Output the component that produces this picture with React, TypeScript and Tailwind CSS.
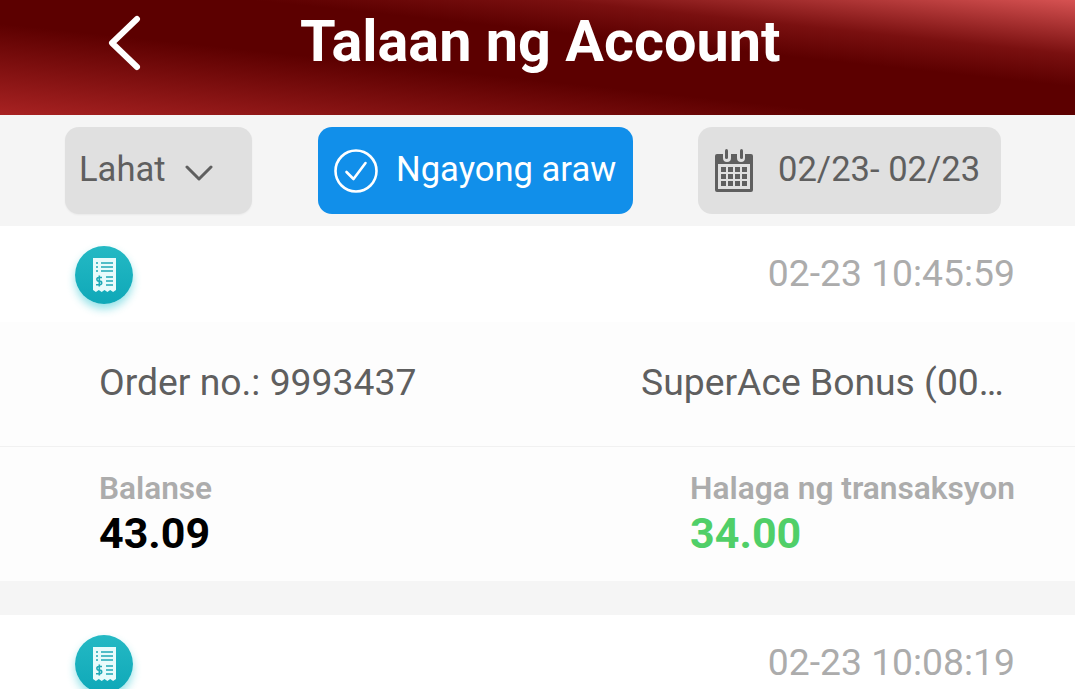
const font = { fontFamily: "Roboto, sans-serif" };

function ReceiptIcon() {
  return (
    <div className="flex h-[58px] w-[58px] items-center justify-center rounded-full bg-[linear-gradient(180deg,#24b9c4_0%,#0fa8b8_100%)] shadow-[0_5px_8px_rgba(20,190,205,0.45)]">
      <svg width="25" height="36" viewBox="0 0 25 36">
        <path d="M1 1h23v32l-2.9 2-2.9-2-2.8 2-2.9-2-2.8 2-2.9-2-2.9 2L1 33z" fill="#e8fbfb" />
        <g stroke="#1fa9b6" strokeWidth="1.6" fill="none">
          <path d="M4 6h2M4 10h2M4 14h2M9 6h12M9 10h12M9 14h12M14 20h7M14 24h7M14 28h7" />
          <path d="M10 20.5H6.7a1.8 1.8 0 0 0 0 3.6h1.2a1.8 1.8 0 0 1 0 3.6H4M7.3 18.5v11" />
        </g>
      </svg>
    </div>
  );
}

function CalendarIcon() {
  return (
    <svg width="40" height="44" viewBox="0 0 40 44">
      <path d="M3 5h6v4a4 4 0 0 0 8 0V5h6v4a4 4 0 0 0 8 0V5h6a2 2 0 0 1 2 2v34a2 2 0 0 1-2 2H3a2 2 0 0 1-2-2V7a2 2 0 0 1 2-2z" fill="#5f5f5f" />
      <rect x="11" y="0" width="3" height="10" rx="1.5" fill="#5f5f5f" />
      <rect x="26" y="0" width="3" height="10" rx="1.5" fill="#5f5f5f" />
      <rect x="4" y="15" width="32" height="25" fill="#e0e0e0" />
      <g fill="#5f5f5f">
        {[18, 25, 32].map((y) =>
          [7, 14, 21, 28].map((x) => <rect key={`${x}-${y}`} x={x} y={y} width="5" height="5" />)
        )}
      </g>
    </svg>
  );
}

function Card({ time, full }: { time: string; full?: boolean }) {
  return (
    <section className="bg-white">
      <div className="flex h-[96px] items-start justify-between pl-[75px] pr-[60px] pt-5">
        <ReceiptIcon />
        <span className="mt-[7px] text-[37.3px] leading-[40px] text-[#acacac]">{time}</span>
      </div>
      {full && (
        <div className="bg-[#fdfdfd]">
          <div className="flex h-[125px] items-center justify-between border-b border-[#f1f1f1] pb-[2px] pl-[99px] pr-[71px] text-[37.3px] text-[#5f5f5f]">
            <span>Order no.: 9993437</span>
            <span className="w-[363px] truncate">SuperAce Bonus (0001)</span>
          </div>
          <div className="flex h-[134px] justify-between pl-[99px] pr-[60px] pt-6">
            <div>
              <div className="text-[31.6px] font-semibold leading-[36px] text-[#acacac]">Balanse</div>
              <div className="mt-[3px] text-[43px] font-bold leading-[46px] text-black">43.09</div>
            </div>
            <div>
              <div className="text-[31.7px] font-semibold leading-[36px] text-[#acacac]">Halaga ng transaksyon</div>
              <div className="mt-[3px] text-[43px] font-bold leading-[46px] text-[#50cf68]">34.00</div>
            </div>
          </div>
        </div>
      )}
    </section>
  );
}

export default function App() {
  return (
    <div className="h-[689px] w-[1075px] overflow-hidden bg-[#f5f5f5]" style={font}>
      <header className="flex h-[115px] items-center bg-[linear-gradient(186deg,#d65252_0%,#7a1010_24%,#5c0000_38%,#5c0000_60%,#a82222_100%)] pb-[30px] pl-[104px]">
        <svg width="40" height="56" viewBox="0 0 40 56" fill="none" stroke="white" strokeWidth="6" strokeLinecap="round" strokeLinejoin="round">
          <path d="M33 4 8 28l25 24" />
        </svg>
        <h1 className="mb-[2px] ml-[156px] text-[57.6px] font-bold leading-none text-white">Talaan ng Account</h1>
      </header>
      <div className="flex h-[111px] items-start pl-[65px] pt-3">
        <div className="flex h-[87px] w-[187px] items-center rounded-[14px] bg-[#e0e0e0] pl-[14px] text-[34.6px] text-[#5f5f5f] shadow-[0_1px_2px_rgba(0,0,0,0.05)]">
          <span className="mb-[1px]">Lahat</span>
          <svg className="ml-[19px] mt-1" width="28" height="18" viewBox="0 0 28 18" fill="none" stroke="#5f5f5f" strokeWidth="3" strokeLinecap="round" strokeLinejoin="round">
            <path d="M2 3l12 12L26 3" />
          </svg>
        </div>
        <div className="ml-[66px] flex h-[87px] w-[315px] items-center rounded-[14px] bg-[#118fea] pl-[16px] text-[34.6px] text-white">
          <svg width="44" height="44" viewBox="0 0 44 44" fill="none" stroke="white" strokeWidth="2.6">
            <circle cx="22" cy="22" r="20.5" />
            <path d="M12.5 23l7 7 12-16" strokeLinecap="round" strokeLinejoin="round" />
          </svg>
          <span className="mb-[2px] ml-[18px]">Ngayong araw</span>
        </div>
        <div className="ml-[65px] flex h-[87px] w-[303px] items-center rounded-[14px] bg-[#e0e0e0] pl-[16px] text-[34.6px] text-[#5f5f5f]">
          <CalendarIcon />
          <span className="mb-[1px] ml-[24px]">02/23- 02/23</span>
        </div>
      </div>
      <Card time="02-23 10:45:59" full />
      <div className="h-[34px]" />
      <Card time="02-23 10:08:19" />
    </div>
  );
}
